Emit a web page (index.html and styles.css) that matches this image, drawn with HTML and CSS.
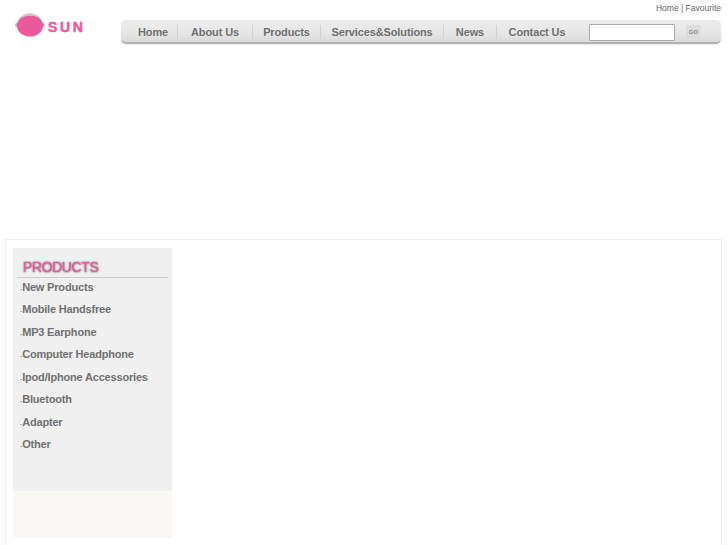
FILE: index.html
```html
<!DOCTYPE html>
<html lang="en">
<head>
    <meta charset="UTF-8">
    <meta name="viewport" content="width=device-width, initial-scale=1.0">
    <title>SUN</title>
    <link rel="stylesheet" href="styles.css">
</head>
<body>
    <div class="top-links"><a href="#">Home</a> | <a href="#">Favourite</a></div>
    <div class="header">
        <a class="logo" href="#">
            <svg width="30" height="25" viewBox="0 0 30 25">
                <path d="M3 12 C5 -1 25 -1 27 12" fill="none" stroke="#c4c4c4" stroke-width="2"/>
                <rect x="0" y="11" width="30" height="4" rx="2" fill="#b0b0b0"/>
                <ellipse cx="15" cy="14" rx="13" ry="10.5" fill="#ec5a9e"/>
            </svg>
            <span class="logo-text">SUN</span>
        </a>
        <div class="nav">
            <a class="nav-item nav-home" href="#">Home</a>
            <a class="nav-item nav-about" href="#">About Us</a>
            <a class="nav-item nav-products" href="#">Products</a>
            <a class="nav-item nav-services" href="#">Services&amp;Solutions</a>
            <a class="nav-item nav-news" href="#">News</a>
            <a class="nav-item nav-contact" href="#">Contact Us</a>
            <input class="search" type="text">
            <button class="go" type="button">GO</button>
        </div>
    </div>
    <div class="content">
        <div class="sidebar">
            <div class="side-menu">
                <h2 class="side-title">PRODUCTS</h2>
                <ul class="side-list">
                    <li><a href="#">New Products</a></li>
                    <li><a href="#">Mobile Handsfree</a></li>
                    <li><a href="#">MP3 Earphone</a></li>
                    <li><a href="#">Computer Headphone</a></li>
                    <li><a href="#">Ipod/Iphone Accessories</a></li>
                    <li><a href="#">Bluetooth</a></li>
                    <li><a href="#">Adapter</a></li>
                    <li><a href="#">Other</a></li>
                </ul>
            </div>
            <div class="side-bottom"></div>
        </div>
    </div>
</body>
</html>
```

FILE: styles.css
```css
html, body {
    margin: 0;
    height: 545px;
    overflow: hidden;
    background-color: white;
    font-family: "Liberation Sans", Arial, sans-serif;
}
a {
    color: inherit;
    text-decoration: none;
}
.top-links {
    height: 16px;
    padding: 3px 6px 0 0;
    box-sizing: border-box;
    text-align: right;
    font-size: 8.5px;
    line-height: 11px;
    color: #666;
}
.header {
    display: flex;
    height: 223px;
    padding-left: 15px;
}
.logo {
    display: flex;
    align-items: flex-start;
    width: 106px;
    margin-top: -4px;
}
.logo-text {
    margin: 7px 0 0 3px;
    font-size: 14px;
    line-height: 17px;
    font-weight: bold;
    letter-spacing: 2.6px;
    color: #ec5a9e;
    -webkit-text-stroke: 0.5px #ec5a9e;
}
.nav {
    display: flex;
    align-items: center;
    width: 592px;
    height: 20px;
    margin-top: 4px;
    padding: 2px 0 0 8px;
    border-radius: 5px;
    background: linear-gradient(#ececec, #e6e6e6 60%, #dadada);
    border-bottom: 2px solid #b0b0b0;
    box-shadow: 0 1px 2px #ececec;
}
.nav-item {
    height: 14px;
    text-align: center;
    font-size: 11px;
    line-height: 14px;
    font-weight: bold;
    letter-spacing: -0.12px;
    color: #707070;
    border-right: 1px solid #d2d2d2;
}
.nav-home { width: 48px; }
.nav-about { width: 74px; }
.nav-products { width: 67px; }
.nav-services { width: 122px; }
.nav-news { width: 52px; }
.nav-contact {
    width: 80px;
    border-right: none;
}
.search {
    width: 86px;
    height: 17px;
    margin: 0 0 0 12px;
    padding: 0;
    box-sizing: border-box;
    border: 1px solid #aaa;
    border-radius: 1px;
    background-color: white;
}
.go {
    width: 15px;
    height: 14px;
    margin-left: 11px;
    padding: 0;
    border: none;
    background-color: #dcdcdc;
    font-family: inherit;
    font-size: 6px;
    font-weight: bold;
    color: #888;
}
.content {
    height: 306px;
    margin: 0 5px;
    padding: 8px 0 0 7px;
    box-sizing: border-box;
    border: 1px solid #eeeeee;
    border-bottom: none;
}
.sidebar {
    width: 159px;
}
.side-menu {
    height: 243px;
    padding: 11px 4px 0;
    box-sizing: border-box;
    background-color: #f0f0f0;
}
.side-title {
    height: 18px;
    margin: 0;
    padding-left: 6px;
    border-bottom: 1px solid #cccccc;
    font-size: 14px;
    line-height: 16px;
    font-weight: normal;
    letter-spacing: -0.4px;
    color: #ec5a9e;
    text-shadow: 0 0 2px #777, 0 0 2px #999;
}
.side-list {
    margin: 0;
    padding: 0 0 0 3px;
    list-style: none;
    font-size: 11px;
    font-weight: bold;
    letter-spacing: -0.18px;
    color: #707070;
}
.side-list li {
    height: 22.45px;
    line-height: 19px;
}
.side-list li::before {
    content: "-";
    font-size: 7px;
    font-weight: normal;
}
.side-bottom {
    height: 47px;
    border-radius: 0 0 3px 3px;
    background-color: #f9f8f4;
}
```
